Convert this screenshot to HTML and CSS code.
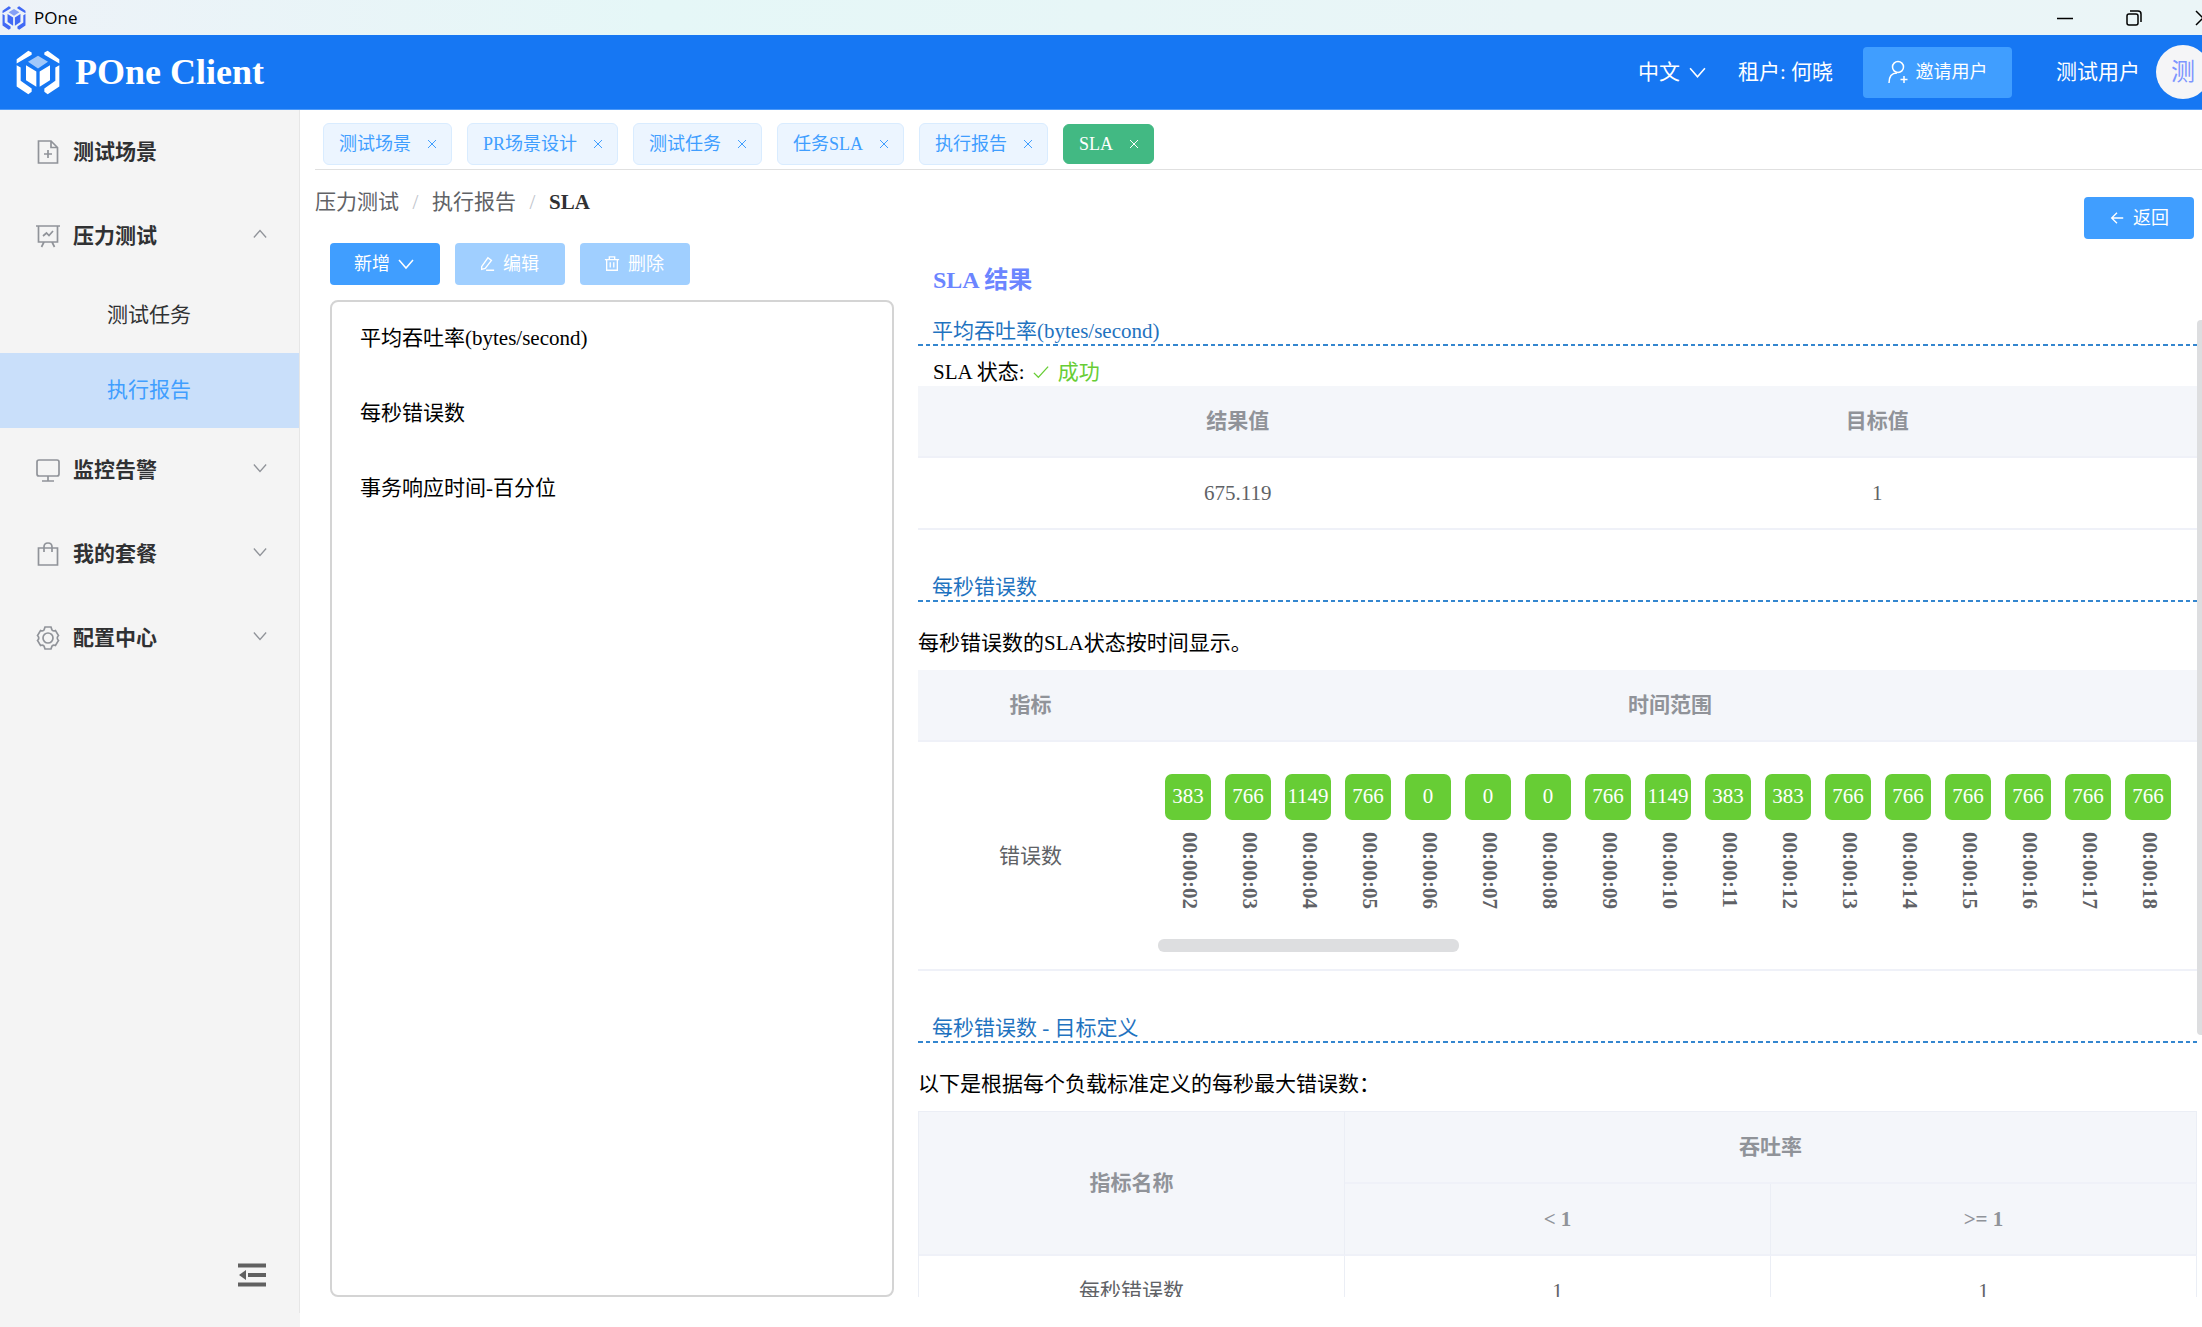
FILE: index.html
```html
<!DOCTYPE html>
<html lang="zh-CN">
<head>
<meta charset="utf-8">
<title>POne</title>
<link rel="stylesheet" href="styles.css">
</head>
<body>
<svg class="sprite" aria-hidden="true">
  <symbol id="logo" viewBox="48 153 132 134">
    <path d="M50 180 85 155 95 160V167L50 193ZM178 180 143 155 133 160V167L178 193ZM50 198 62 205V245L95 268V278L85 285 50 262ZM178 198 166 205V245L133 268V278L143 285 178 262ZM78 198 109 217V263L78 243ZM150 198 119 217V263L150 243Z"/>
    <path opacity=".6" d="M84 188 114 170 144 188 114 208Z"/>
  </symbol>
  <symbol id="close" viewBox="0 0 12 12"><path d="M2 2 10 10M10 2 2 10"/></symbol>
  <symbol id="down" viewBox="0 0 16 16"><path d="M1 4 8 12 15 4"/></symbol>
</svg>

<div class="titlebar">
  <svg class="titlebar-logo"><use href="#logo"/></svg>
  <span class="titlebar-name">POne</span>
  <div class="window-controls">
    <button aria-label="最小化"><svg viewBox="0 0 16 16"><path d="M0 8.5H16"/></svg></button>
    <button aria-label="还原"><svg viewBox="0 0 16 16"><rect x="1" y="4" width="11" height="11" rx="2"/><path d="M4 1H12Q15 1 15 4V12"/></svg></button>
    <button aria-label="关闭"><svg viewBox="0 0 16 16"><path d="M1 1 15 15M15 1 1 15"/></svg></button>
  </div>
</div>

<header class="header">
  <svg class="brand-logo"><use href="#logo"/></svg>
  <h1 class="brand">POne Client</h1>
  <div class="header-right">
    <button class="lang">中文<svg><use href="#down"/></svg></button>
    <span class="tenant">租户: 何晓</span>
    <button class="btn invite"><svg viewBox="0 0 20 24"><circle cx="10" cy="7" r="5.500"/><path d="M1 23Q1 13 9 13M16 16V23M12.500 19.500H19.500"/></svg>邀请用户</button>
    <span class="user">测试用户</span>
    <span class="avatar">测</span>
  </div>
</header>

<div class="shell">
  <aside class="sidebar">
    <nav class="menu">
      <button class="menu-item"><svg class="menu-icon" viewBox="0 0 24 24"><path d="M2.500 1H15L21.500 7.500V23H2.500ZM15 1V7.500H21.500M12 10V18M8 14H16"/></svg>测试场景</button>
      <button class="menu-item"><svg class="menu-icon" viewBox="0 0 24 24"><path d="M0 2H24M2.500 2V18H21.500V2M8 18 5.500 23M16 18 18.500 23M7 12 10.500 9 13 11.500 17 7"/></svg>压力测试<svg class="arrow arrow-up"><use href="#down"/></svg></button>
      <a class="sub-item" href="#">测试任务</a>
      <a class="sub-item active" href="#">执行报告</a>
      <button class="menu-item"><svg class="menu-icon" viewBox="0 0 24 24"><rect x="1" y="2" width="22" height="16" rx="2"/><path d="M12 18V23M6 23H18"/></svg>监控告警<svg class="arrow"><use href="#down"/></svg></button>
      <button class="menu-item"><svg class="menu-icon" viewBox="0 0 24 24"><path d="M2.500 6H21.500V23H2.500ZM8 10V5Q8 1 12 1T16 5V10"/></svg>我的套餐<svg class="arrow"><use href="#down"/></svg></button>
      <button class="menu-item"><svg class="menu-icon" viewBox="0 0 24 24"><circle cx="12" cy="12" r="5"/><path d="M9 1H15L16 4Q17.500 5.500 19.500 4.500L22.500 9.500Q20 12 22.500 14.500L19.500 19.500Q17.500 18.500 16 20L15 23H9L8 20Q6.500 18.500 4.500 19.500L1.500 14.500Q4 12 1.500 9.500L4.500 4.500Q6.500 5.500 8 4Z"/></svg>配置中心<svg class="arrow"><use href="#down"/></svg></button>
      <button class="collapse" aria-label="收起菜单"><svg viewBox="0 0 28 24"><path d="M0 2.500H28M10 12H28M0 21.500H28"/><path class="solid" d="M1 12 8 7V17Z"/></svg></button>
    </nav>
  </aside>

  <main class="content">
    <div class="tabs">
      <div class="tab"><a href="#">测试场景</a><button aria-label="关闭"><svg><use href="#close"/></svg></button></div>
      <div class="tab"><a href="#">PR场景设计</a><button aria-label="关闭"><svg><use href="#close"/></svg></button></div>
      <div class="tab"><a href="#">测试任务</a><button aria-label="关闭"><svg><use href="#close"/></svg></button></div>
      <div class="tab"><a href="#">任务SLA</a><button aria-label="关闭"><svg><use href="#close"/></svg></button></div>
      <div class="tab"><a href="#">执行报告</a><button aria-label="关闭"><svg><use href="#close"/></svg></button></div>
      <div class="tab current"><a href="#">SLA</a><button aria-label="关闭"><svg><use href="#close"/></svg></button></div>
    </div>

    <div class="page-head">
      <nav class="crumbs"><a href="#">压力测试</a><i>/</i><a href="#">执行报告</a><i>/</i><b>SLA</b></nav>
      <button class="btn back"><svg viewBox="0 0 18 18"><path d="M16 9H3M9 3 3 9 9 15"/></svg>返回</button>
    </div>

    <div class="columns">
      <section class="left">
        <div class="toolbar">
          <button class="btn">新增<svg><use href="#down"/></svg></button>
          <button class="btn" disabled><svg viewBox="0 0 18 18"><path d="M3 12 10 2 14 5 7 14 3 15ZM8 16H17"/></svg>编辑</button>
          <button class="btn" disabled><svg viewBox="0 0 18 18"><path d="M1 4H17M6 4V1H12V4M3 4V16H15V4M7 7V13M11 7V13"/></svg>删除</button>
        </div>
        <ul class="metric-list">
          <li><button>平均吞吐率(bytes/second)</button></li>
          <li><button>每秒错误数</button></li>
          <li><button>事务响应时间-百分位</button></li>
        </ul>
      </section>

      <section class="right">
        <h2 class="result-title">SLA 结果</h2>
        <div class="results">
          <h3 class="section-title">平均吞吐率(bytes/second)</h3>
          <p class="status">SLA 状态: <span class="ok"><svg viewBox="0 0 18 18"><path d="M1 10 6 15 17 3"/></svg>成功</span></p>
          <table class="grid">
            <thead><tr><th>结果值</th><th>目标值</th></tr></thead>
            <tbody><tr><td>675.119</td><td>1</td></tr></tbody>
          </table>

          <h3 class="section-title">每秒错误数</h3>
          <p class="note">每秒错误数的SLA状态按时间显示。</p>
          <table class="grid timeline">
            <thead><tr><th class="metric">指标</th><th>时间范围</th></tr></thead>
            <tbody><tr>
              <td>错误数</td>
              <td class="strip-cell">
                <ol class="strip">
                  <li><span>383</span><time>00:00:02</time></li>
                  <li><span>766</span><time>00:00:03</time></li>
                  <li><span>1149</span><time>00:00:04</time></li>
                  <li><span>766</span><time>00:00:05</time></li>
                  <li><span>0</span><time>00:00:06</time></li>
                  <li><span>0</span><time>00:00:07</time></li>
                  <li><span>0</span><time>00:00:08</time></li>
                  <li><span>766</span><time>00:00:09</time></li>
                  <li><span>1149</span><time>00:00:10</time></li>
                  <li><span>383</span><time>00:00:11</time></li>
                  <li><span>383</span><time>00:00:12</time></li>
                  <li><span>766</span><time>00:00:13</time></li>
                  <li><span>766</span><time>00:00:14</time></li>
                  <li><span>766</span><time>00:00:15</time></li>
                  <li><span>766</span><time>00:00:16</time></li>
                  <li><span>766</span><time>00:00:17</time></li>
                  <li><span>766</span><time>00:00:18</time></li>
                </ol>
                <div class="scroll-x"></div>
              </td>
            </tr></tbody>
          </table>

          <h3 class="section-title">每秒错误数 - 目标定义</h3>
          <p class="note">以下是根据每个负载标准定义的每秒最大错误数：</p>
          <table class="grid bordered">
            <thead>
              <tr><th rowspan="2">指标名称</th><th colspan="2">吞吐率</th></tr>
              <tr><th>&lt; 1</th><th>&gt;= 1</th></tr>
            </thead>
            <tbody><tr><td>每秒错误数</td><td>1</td><td>1</td></tr></tbody>
          </table>
          <div class="scroll-y"></div>
        </div>
      </section>
    </div>
  </main>
</div>
</body>
</html>
```

FILE: styles.css
```css
* { box-sizing: border-box; }

body {
  margin: 0;
  height: 100vh;
  display: flex;
  flex-direction: column;
  overflow: hidden;
  background: #fff;
  color: #000;
  font: 21px/28px "Liberation Serif", "Noto Sans CJK SC", serif;
}

button {
  padding: 0;
  border: 0;
  background: none;
  color: inherit;
  font: inherit;
}

a { color: inherit; text-decoration: none; }
h1, h2, h3, p, ul, ol { margin: 0; padding: 0; list-style: none; }
svg { flex: none; fill: none; stroke: currentColor; }
.sprite { position: absolute; width: 0; height: 0; }

/* Window title bar */
.titlebar {
  flex: none;
  display: flex;
  align-items: center;
  height: 35px;
  background: linear-gradient(90deg, #edf2f8, #e5f7f7 30%, #e9f5f7 70%, #ebf5f7);
}
.titlebar-logo { width: 24px; height: 24px; margin-left: 2px; fill: #4169f5; stroke: none; }
.titlebar-name { margin-left: 8px; font-family: "Open Sans", "Noto Sans", sans-serif; font-size: 17px; }
.window-controls { display: flex; gap: 53px; margin-left: auto; margin-right: -9px; }
.window-controls button { width: 16px; height: 18px; }
.window-controls svg { display: block; width: 16px; height: 16px; stroke-width: 1.500; }

/* Application header */
.header {
  flex: none;
  display: flex;
  align-items: center;
  height: 75px;
  padding-left: 16px;
  background: #1677f3;
  border-bottom: 1px solid #4c99f8;
  color: #fff;
}
.brand-logo { width: 44px; height: 45px; fill: #fff; stroke: none; }
.brand { margin-left: 15px; font-size: 36px; line-height: 42px; }
.header-right { display: flex; align-items: center; margin-left: auto; margin-right: -8px; }
.lang { display: flex; align-items: center; gap: 9px; }
.lang svg { width: 17px; height: 17px; stroke-width: 1.500; }
.tenant { margin-left: 32px; }
.user { margin-left: 44px; }
.avatar {
  width: 54px;
  height: 54px;
  margin-left: 16px;
  border-radius: 50%;
  background: #f5f5f7;
  color: #7d95ff;
  font-size: 24px;
  line-height: 54px;
  text-align: center;
}

.btn {
  display: flex;
  align-items: center;
  justify-content: center;
  gap: 8px;
  width: 110px;
  height: 42px;
  border-radius: 4px;
  background: #409eff;
  color: #fff;
  font-size: 18px;
}
.btn:disabled { background: #a0cfff; }
.btn svg { width: 16px; height: 18px; stroke-width: 1.500; }
.btn.invite { width: 149px; height: 51px; margin-left: 30px; }
.btn.invite svg { width: 20px; height: 24px; }
.toolbar .btn { padding-right: 2px; }

/* Sidebar */
.shell { flex: 1; display: flex; min-height: 0; }
.sidebar { flex: none; width: 300px; padding-bottom: 14px; background: #f4f4f4; }
.menu {
  display: flex;
  flex-direction: column;
  height: 100%;
  border-right: 1px solid #e6e6e6;
}
.menu-item {
  display: flex;
  align-items: center;
  height: 84px;
  padding: 0 32px 0 36px;
  color: #303133;
  font-weight: bold;
}
.menu-icon { width: 24px; height: 24px; margin-right: 13px; stroke: #909399; stroke-width: 1.700; }
.arrow { width: 14px; height: 14px; margin-left: auto; margin-bottom: 4px; stroke: #909399; stroke-width: 1.500; }
.arrow-up { transform: scaleY(-1); }
.sub-item { height: 75px; padding-left: 107px; line-height: 74px; color: #303133; }
.sub-item.active { background: #c9dffa; color: #409eff; }
.collapse { align-self: flex-end; margin: auto 33px 26px 0; color: #606060; }
.collapse svg { display: block; width: 28px; height: 24px; stroke-width: 4; }
.collapse .solid { fill: currentColor; stroke: none; }

/* Tabs */
.content { flex: 1; display: flex; flex-direction: column; min-width: 0; padding-left: 15px; }
.tabs {
  flex: none;
  display: flex;
  align-items: center;
  gap: 15px;
  height: 60px;
  padding: 8px 0 0 8px;
  border-bottom: 1px solid #e0e0e0;
}
.tab {
  display: flex;
  align-items: center;
  gap: 10px;
  height: 42px;
  padding: 0 9px 0 15px;
  border: 1px solid #d9ecff;
  border-radius: 6px;
  background: #ecf5ff;
  color: #409eff;
  font-size: 18px;
}
.tab button { display: flex; align-items: center; justify-content: center; width: 21px; height: 21px; }
.tab svg { width: 12px; height: 12px; }
.tab.current { height: 40px; border-color: #42b983; background: #42b983; color: #fff; }

/* Breadcrumb row */
.page-head { flex: none; display: flex; justify-content: space-between; padding: 17px 8px 4px 0; }
.crumbs { display: flex; line-height: 30px; color: #606266; }
.crumbs i { width: 33px; text-align: center; color: #c0c4cc; font-style: normal; }
.crumbs b { color: #303133; }
.back { margin-top: 10px; }

/* Two columns */
.columns { flex: 1; display: flex; gap: 24px; min-height: 0; padding: 0 0 30px 15px; }
.left { flex: none; display: flex; flex-direction: column; gap: 15px; width: 564px; }
.toolbar { display: flex; gap: 15px; }
.metric-list { flex: 1; border: 2px solid #d4d4d4; border-radius: 8px; }
.metric-list button { display: block; width: 100%; height: 75px; padding: 0 0 4px 28px; text-align: left; }

.right { flex: 1; display: flex; flex-direction: column; min-width: 0; padding-top: 19px; }
.result-title { padding: 0 15px; margin-bottom: 19px; font-size: 24px; line-height: 36px; color: #6b85ff; }
.results { position: relative; flex: 1; min-height: 0; padding-right: 5px; overflow: hidden; }

.section-title {
  height: 29px;
  padding: 0 14px;
  font-size: 21px;
  font-weight: normal;
  color: #1f73c0;
  background: repeating-linear-gradient(90deg, #3486cf 0 5px, #fff 5px 8px, #3486cf 8px 12px, #fff 12px 15px) left bottom / 100% 2px no-repeat;
}
.grid + .section-title { margin-top: 43px; }
.status { padding: 13px 15px 0; line-height: 27px; }
.ok { margin-left: 3px; color: #67cd35; }
.ok svg { width: 16px; height: 16px; margin-right: 9px; stroke-width: 1.500; vertical-align: -1px; }
.note { padding: 27px 0 13px; }

.grid { width: 100%; table-layout: fixed; border-collapse: separate; border-spacing: 0; color: #606266; }
.grid th, .grid td { height: 72px; padding: 0; border-bottom: 2px solid #eff1f8; text-align: center; }
.grid th { background: #f4f6fa; color: #909399; }
.timeline .metric { width: 225px; }
.grid .strip-cell { height: 229px; padding: 18px 15px 17px; overflow: hidden; }

.strip { display: flex; height: 179px; padding-top: 14px; overflow: hidden; }
.strip li { flex: none; width: 60px; padding-left: 7px; }
.strip span {
  display: block;
  width: 46px;
  height: 46px;
  margin-bottom: 12px;
  border-radius: 7px;
  background: #67cd35;
  color: #fff;
  line-height: 45px;
}
.strip time { display: block; width: 50px; line-height: 50px; font-weight: bold; writing-mode: vertical-rl; text-align: left; }

.scroll-x { width: 301px; height: 13px; border-radius: 6px; background: #dddee0; }
.scroll-y {
  position: absolute;
  top: 3px;
  right: -4px;
  width: 9px;
  height: 73%;
  border-radius: 4px;
  background: #dddee0;
}

.bordered { border-top: 1px solid #ebeef5; border-left: 1px solid #ebeef5; }
.bordered th, .bordered td { border-right: 1px solid #ebeef5; }
```
